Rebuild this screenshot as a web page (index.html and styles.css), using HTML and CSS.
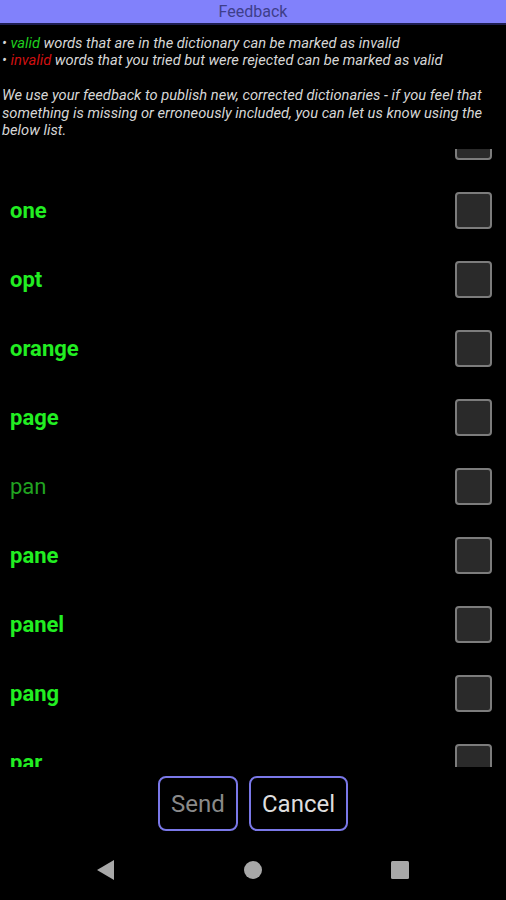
FILE: index.html
```html
<!DOCTYPE html>
<html>
<head>
<meta charset="utf-8">
<link rel="stylesheet" href="styles.css">
</head>
<body>
<div class="screen">
  <header class="title">Feedback</header>
  <div class="intro">
    <p class="line">• <span class="valid">valid</span> words that are in the dictionary can be marked as invalid</p>
    <p class="line">• <span class="invalid">invalid</span> words that you tried but were rejected can be marked as valid</p>
    <p class="line blank">&nbsp;</p>
    <p class="para">We use your feedback to publish new, corrected dictionaries - if you feel that something is missing or erroneously included, you can let us know using the below list.</p>
  </div>
  <div class="list">
    <div class="list-inner">
      <div class="row"><span class="word">oil</span><span class="box"></span></div>
      <div class="row"><span class="word">one</span><span class="box"></span></div>
      <div class="row"><span class="word">opt</span><span class="box"></span></div>
      <div class="row"><span class="word">orange</span><span class="box"></span></div>
      <div class="row"><span class="word">page</span><span class="box"></span></div>
      <div class="row"><span class="word plain">pan</span><span class="box"></span></div>
      <div class="row"><span class="word">pane</span><span class="box"></span></div>
      <div class="row"><span class="word">panel</span><span class="box"></span></div>
      <div class="row"><span class="word">pang</span><span class="box"></span></div>
      <div class="row"><span class="word">par</span><span class="box"></span></div>
    </div>
  </div>
  <div class="actions">
    <button class="btn send">Send</button>
    <button class="btn cancel">Cancel</button>
  </div>
  <nav class="navbar">
    <svg class="nav-icon" width="20" height="22" viewBox="0 0 20 22"><polygon points="18,1 18,21 1,11" fill="#a8a8a8"/></svg>
    <svg class="nav-icon" width="20" height="20" viewBox="0 0 20 20"><circle cx="10" cy="10" r="9" fill="#a8a8a8"/></svg>
    <svg class="nav-icon" width="20" height="20" viewBox="0 0 20 20"><rect x="1" y="1" width="18" height="18" rx="1.5" fill="#a8a8a8"/></svg>
  </nav>
</div>
</body>
</html>
```

FILE: styles.css
```css
* { box-sizing: border-box; }
html, body { margin: 0; padding: 0; background: #000; }
body { font-family: Roboto, "Noto Sans", "Liberation Sans", sans-serif; }
.screen { width: 506px; height: 900px; display: flex; flex-direction: column; overflow: hidden; }
.title {
  height: 25px;
  background: #8181fb;
  border-bottom: 2px solid #1e1e50;
  color: #3e3e8a;
  font-size: 16px;
  line-height: 23px;
  text-align: center;
}
.intro {
  padding: 10px 0 0 2px;
  color: #d6d6d6;
  font-style: italic;
  font-size: 14.7px;
  line-height: 17.4px;
  height: 124px;
}
.intro p { margin: 0; }
.valid { color: #1fcf1f; }
.invalid { color: #d01010; }
.list { height: 618px; overflow: hidden; }
.list-inner { margin-top: -42px; }
.row {
  height: 69px;
  display: flex;
  align-items: center;
  justify-content: space-between;
  padding: 0 14px 0 10px;
}
.word { color: #22ee22; font-weight: bold; font-size: 22px; }
.word.plain { font-weight: normal; color: #21a321; }
.box {
  width: 37px;
  height: 37px;
  border: 2px solid #7c7c7c;
  border-radius: 4px;
  background: #2a2a2a;
}
.actions {
  height: 73px;
  display: flex;
  justify-content: center;
  gap: 11px;
  padding-top: 9px;
}
.btn {
  height: 55px;
  background: #000;
  border: 2px solid #7a78e8;
  border-radius: 8px;
  font-family: Roboto, "Noto Sans", "Liberation Sans", sans-serif;
  font-size: 24px;
  padding: 0;
}
.send { width: 80px; color: #8a8a8a; }
.cancel { width: 99px; color: #dedede; }
.navbar {
  flex: 1;
  display: flex;
  align-items: center;
  justify-content: space-between;
  padding: 0 96px 0 96px;
}
.nav-icon { display: block; }
```
